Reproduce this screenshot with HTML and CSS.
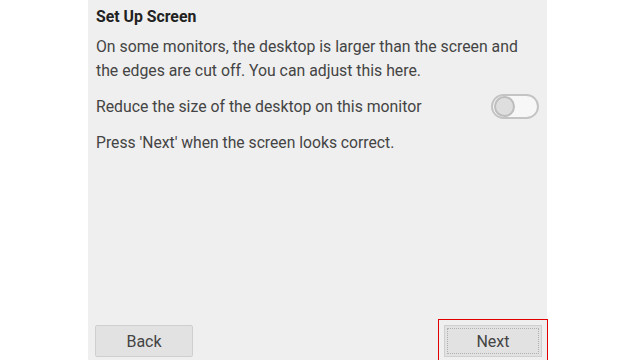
FILE: index.html
```html
<!DOCTYPE html>
<html lang="en">
<head>
  <meta charset="UTF-8">
  <meta name="viewport" content="width=device-width, initial-scale=1.0">
  <title>Set Up Screen</title>
  <link rel="stylesheet" href="styles.css">
</head>
<body>
  <div class="panel">
    <h1 class="title">Set Up Screen</h1>
    <p class="intro">On some monitors, the desktop is larger than the screen and the edges are cut off. You can adjust this here.</p>
    <div class="option-row">
      <span>Reduce the size of the desktop on this monitor</span>
      <div class="switch"><div class="knob"></div></div>
    </div>
    <p class="hint">Press 'Next' when the screen looks correct.</p>
    <div class="buttons">
      <button class="btn">Back</button>
      <button class="btn focused">Next</button>
    </div>
  </div>
</body>
</html>
```

FILE: styles.css
```css
body {
  margin: 0;
  background-color: #fff;
  font-family: Roboto, "Liberation Sans", sans-serif;
  color: #444;
}
.panel {
  width: 459px;
  height: 360px;
  margin-left: 88px;
  box-sizing: border-box;
  padding: 7px 5px 3px 8px;
  background-color: #efefef;
  display: flex;
  flex-direction: column;
}
.title {
  margin: 0;
  font-size: 15.8px;
  line-height: 20px;
  font-weight: bold;
  color: #222;
}
.intro {
  margin: 8px 0 0;
  font-size: 15.8px;
  line-height: 24px;
  width: 440px;
}
.option-row {
  margin-top: 10px;
  display: flex;
  align-items: center;
  justify-content: space-between;
  font-size: 15.8px;
  height: 26px;
  padding-right: 3px;
}
.switch {
  width: 43px;
  height: 21px;
  border: 2px solid #c4c4c4;
  border-radius: 13px;
  background-color: #f7f7f7;
  display: flex;
  align-items: center;
  padding-left: 1px;
}
.knob {
  width: 17px;
  height: 17px;
  border-radius: 50%;
  border: 2px solid #bdbdbd;
  background-color: #dedede;
}
.hint {
  margin: 12px 0 0;
  font-size: 15.7px;
  line-height: 24px;
}
.buttons {
  margin-top: auto;
  display: flex;
  justify-content: space-between;
}
.btn {
  width: 98px;
  height: 32px;
  font-family: Roboto, "Liberation Sans", sans-serif;
  font-size: 16px;
  color: #444;
  background-color: #e2e2e2;
  border: 1px solid #cfcfcf;
  border-radius: 2px;
  position: relative;
}
.btn:first-child {
  margin-left: -1px;
}
.focused {
  border-radius: 0;
  outline: 1px solid #e00000;
  outline-offset: 5px;
}
.focused::after {
  content: "";
  position: absolute;
  inset: 2px;
  border: 1px dotted #b0b0b0;
}
```
